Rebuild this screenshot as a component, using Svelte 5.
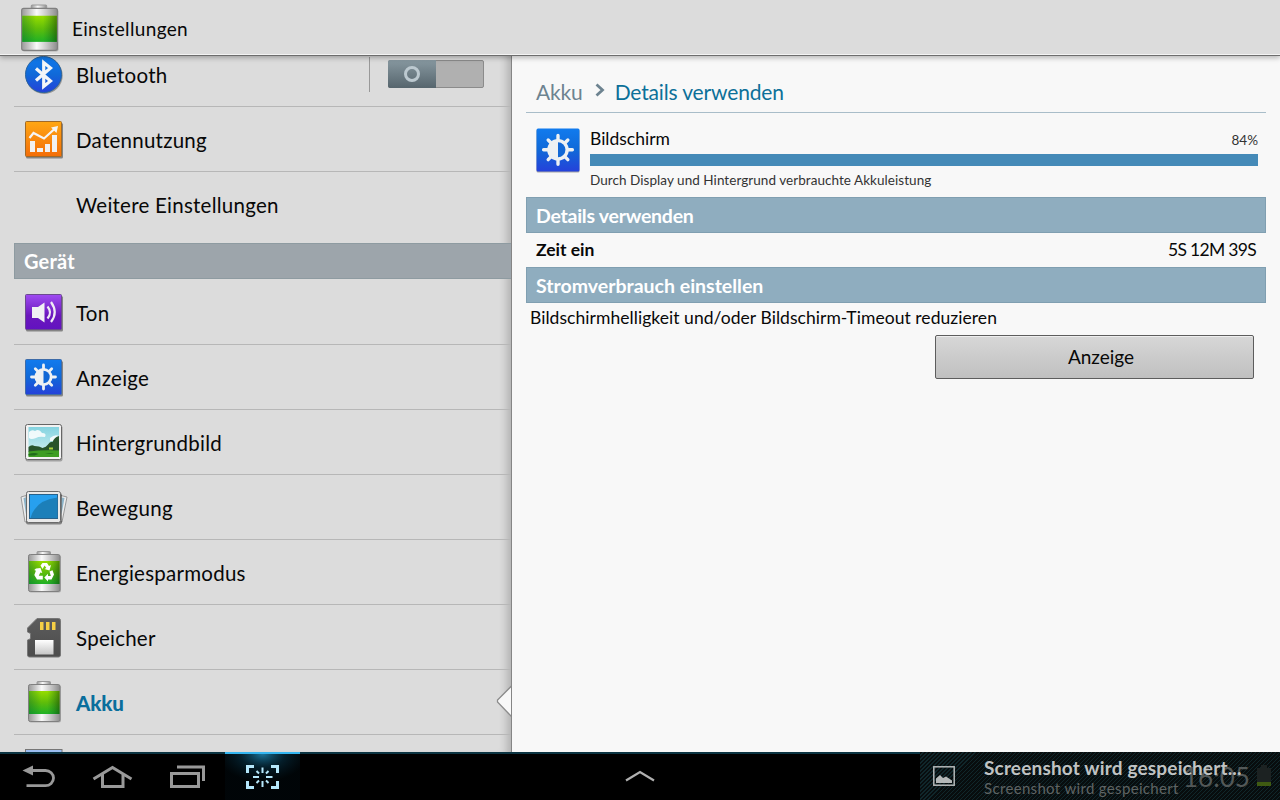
<script>
  const network = [
    { label: 'Bluetooth', icon: 'bluetooth', toggle: true },
    { label: 'Datennutzung', icon: 'data' },
    { label: 'Weitere Einstellungen', icon: '', last: true }
  ];
  const device = [
    { label: 'Ton', icon: 'sound' },
    { label: 'Anzeige', icon: 'display' },
    { label: 'Hintergrundbild', icon: 'wallpaper' },
    { label: 'Bewegung', icon: 'motion' },
    { label: 'Energiesparmodus', icon: 'saver' },
    { label: 'Speicher', icon: 'storage' },
    { label: 'Akku', icon: 'battery', selected: true },
    { label: '', icon: 'next' }
  ];
</script>

{#snippet gear()}
  <g stroke="#eef1f3" stroke-width="2.800" stroke-linecap="round">
    <path d="M23.500 12V36M11.500 24H35.500M15.300 15.800L31.700 32.200M15.300 32.200L31.700 15.800" />
  </g>
  <circle cx="23.500" cy="24" r="9" fill="#eef1f3" />
  <path d="M23.500 17.800a6.200 6.200 0 0 1 0 12.400z" fill="#1268d6" />
{/snippet}

{#snippet battery(saver)}
  <path d="M17 7V4.500Q17 3.500 18 3.500H29.500Q30.500 3.500 30.500 4.500V7z" fill="url(#metal)" stroke="#999" stroke-width="1" />
  <rect x="9" y="7.500" width="32" height="37" rx="1.800" fill="#0003" />
  <rect x="8.500" y="6.500" width="31.500" height="37" rx="1.800" fill="url(#metal)" stroke="#808080" stroke-width="1" />
  <rect x="9" y="13" width="30.500" height="23" fill="url(#green)" />
  <rect x="9" y="13" width="30.500" height="23" fill="url(#side)" />
  {#if saver}
    <g fill="#fff">
      <path d="M20.500 17.500L22.500 15H27L29 18L31 17L29.500 22.500L24.500 21L26.300 20L24.600 17.500L22.500 21z" />
      <path d="M29.500 23.500L32.500 22.300L34 26.500L31.500 31.500H28V33.500L24.300 29.500L28 25.800V28H30.800z" />
      <path d="M16 20.500L20.500 20L22.300 25L20.300 24.500L18.800 27.800H22.800V31.500H17L14.300 27L15.900 22.800L14.300 22z" />
    </g>
  {/if}
{/snippet}

{#snippet icon(name)}
  <svg class="icon" viewBox="0 0 48 48" aria-hidden="true">
    {#if name === 'bluetooth'}
      <circle cx="24.200" cy="25.500" r="18.500" fill="#0005" />
      <circle cx="23.500" cy="24.500" r="18" fill="url(#blue)" stroke="#28649f" stroke-width="1" />
      <path d="M16 18.500L30.500 31L23.700 36.500V12.500L30.500 18L16 30.500" fill="none" stroke="#f4f6f8" stroke-width="3.200" />
    {:else if name === 'data'}
      <rect x="6" y="8" width="37" height="35.500" rx="1.500" fill="#0006" />
      <rect x="5.500" y="6.500" width="36" height="35" rx="1" fill="url(#orange)" stroke="#a06a28" />
      <path d="M10 26h5v11h-5zM17 33h6v4h-6zM25 29h5v8h-5zM32 20h5v17h-5z" fill="#f1f1f1" />
      <path d="M9.500 23L13.500 18L24 23.500L34.500 14" fill="none" stroke="#f5f5f5" stroke-width="2.200" />
      <path d="M31 12.500L38 11L36.500 18z" fill="#f5f5f5" />
    {:else if name === 'sound'}
      <rect x="6" y="8" width="37" height="35.500" rx="1.500" fill="#0006" />
      <rect x="5.500" y="6.500" width="36" height="35" rx="1" fill="url(#purple)" stroke="#6b4a8f" />
      <path d="M12 19h6l6.500-4.500v20L18 30h-6z" fill="#f1f1f3" />
      <path d="M27.500 18.500Q32.500 24.500 27.500 30.500M31 14Q38.500 24.500 31 34" fill="none" stroke="#efeaf4" stroke-width="2.200" />
    {:else if name === 'display'}
      <rect x="6" y="8" width="37" height="35.500" rx="1.500" fill="#0006" />
      <rect x="5.500" y="6.500" width="36" height="35" rx="1" fill="url(#blue)" stroke="#3d6ba8" />
      {@render gear()}
    {:else if name === 'wallpaper'}
      <rect x="5.500" y="7.500" width="37" height="36" rx="2" fill="#0004" />
      <rect x="5.500" y="6.500" width="36" height="35" rx="2" fill="#f2f2f2" stroke="#666" />
      <rect x="8.500" y="9" width="30.500" height="30" fill="url(#sky)" />
      <path d="M9 14q3-3 6-1 4-3 7 2 5 0 3 4-6-1-9 1-5 2-7 0zM30 20q5-4 9-2v5h-9z" fill="#fff" opacity=".85" />
      <path d="M8.500 29q3-3 6-1 5 0 8 2 4-1 5-3 3-4 5-3 2-5 6.500-6v16h-30.500z" fill="#28542b" />
      <path d="M8.500 33.500q14-2 30.500-1V39H8.500z" fill="#3d9d22" />
      <path d="M8.500 36q6-2 10 0l-4 1.500h-6zM25 36q6-1.500 9 0z" fill="#1f6a1b" />
      <path d="M29 30.500h4" stroke="#a8d23a" stroke-width="2" />
    {:else if name === 'motion'}
      <g fill="#ececec" stroke="#999"><path d="M1 14l5-1.500 2 26-3 .500zM47 14l-6-1.500-2 26 3 .500z" /></g>
      <path d="M3.500 15l2.500-.500v17zM44.500 15l-3-.500v17z" fill="#8db4c9" />
      <rect x="6" y="10" width="36" height="31.500" rx="2" fill="#0006" />
      <rect x="6.500" y="8.500" width="34" height="31" rx="2" fill="#e8e8e8" stroke="#6a6a6a" />
      <rect x="9.500" y="11.500" width="28" height="24" fill="#27a0ee" stroke="#28618a" />
      <path d="M10.500 35q5-18 27-20.500V35z" fill="#1c7fb9" />
    {:else if name === 'saver'}
      {@render battery(true)}
    {:else if name === 'battery'}
      {@render battery(false)}
    {:else if name === 'storage'}
      <path d="M17 5.500H38.500Q40.500 5.500 40.500 7.500V42Q40.500 44 38.500 44H9.500Q7.500 44 7.500 42V27Q10.500 26.500 10.500 25V20.500L7.500 19V15z" fill="url(#card)" stroke="#777" />
      <path d="M20 9h3.500v8H20zM26 9h3.500v8H26zM32 9h3.500v8H32z" fill="#f5cf45" />
      <rect x="15" y="27" width="18.500" height="14.500" fill="url(#slot)" />
    {:else if name === 'next'}
      <rect x="5.500" y="6.500" width="36.500" height="36" fill="#9bbcf0" stroke="#777" />
    {/if}
  </svg>
{/snippet}

{#snippet row(item)}
  <li class="row" class:last={item.last} class:selected={item.selected}>
    {@render icon(item.icon)}
    <span class="label">{item.label}</span>
    {#if item.toggle}
      <span class="switch-area"><span class="switch"><span class="knob"><i></i></span></span></span>
    {/if}
  </li>
{/snippet}

<svg class="defs" aria-hidden="true">
  <defs>
    <linearGradient id="metal"><stop offset="0" stop-color="#999" /><stop offset=".2" stop-color="#c4c4c4" /><stop offset=".42" stop-color="#fafafa" /><stop offset=".7" stop-color="#c8c8c8" /><stop offset="1" stop-color="#8c8c8c" /></linearGradient>
    <linearGradient id="green" x2="0" y2="1"><stop offset="0" stop-color="#97dd00" /><stop offset=".5" stop-color="#5fbd0a" /><stop offset="1" stop-color="#1fb126" /></linearGradient>
    <linearGradient id="side"><stop offset="0" stop-color="#063" stop-opacity=".4" /><stop offset=".4" stop-color="#063" stop-opacity="0" /><stop offset=".6" stop-color="#063" stop-opacity="0" /><stop offset="1" stop-color="#052e00" stop-opacity=".5" /></linearGradient>
    <linearGradient id="blue" x2="0" y2="1"><stop offset="0" stop-color="#117bee" /><stop offset=".5" stop-color="#1069d8" /><stop offset="1" stop-color="#2541da" /></linearGradient>
    <linearGradient id="orange" x2="0" y2="1"><stop offset="0" stop-color="#ffa714" /><stop offset="1" stop-color="#f36d08" /></linearGradient>
    <linearGradient id="purple" x2="0" y2="1"><stop offset="0" stop-color="#9f4bf2" /><stop offset=".6" stop-color="#6b17bd" /><stop offset="1" stop-color="#6212c0" /></linearGradient>
    <linearGradient id="sky" x2="0" y2="1"><stop offset="0" stop-color="#84d3e0" /><stop offset="1" stop-color="#d9f3f3" /></linearGradient>
    <linearGradient id="card" x2="0" y2="1"><stop offset="0" stop-color="#5c5c5c" /><stop offset="1" stop-color="#4c4c4c" /></linearGradient>
    <linearGradient id="slot" x2="0" y2="1"><stop offset="0" stop-color="#fff" /><stop offset="1" stop-color="#c6c6c6" /></linearGradient>
    <radialGradient id="glow" cx=".5" cy="0" r=".6"><stop offset="0" stop-color="#2299cc" stop-opacity=".75" /><stop offset=".5" stop-color="#0a4a68" stop-opacity=".4" /><stop offset="1" stop-color="#02141e" stop-opacity=".25" /></radialGradient>
  </defs>
</svg>

<div class="screen">
  <header>
    <svg class="app-icon" viewBox="0 0 48 48" aria-hidden="true">{@render battery(false)}</svg>
    <h1>Einstellungen</h1>
  </header>

  <main>
    <nav class="list">
      <ul>
        {#each network as item}{@render row(item)}{/each}
      </ul>
      <h2 class="group">Gerät</h2>
      <ul>
        {#each device as item}{@render row(item)}{/each}
      </ul>
      <svg class="pointer" viewBox="0 0 16 34" aria-hidden="true">
        <path d="M16 1L1.500 15.500V17L16 32z" fill="#f8f8f8" />
        <path d="M15.500 1L1.500 15V17L15.500 31.500" fill="none" stroke="#8c8c8c" stroke-width="1.300" />
      </svg>
    </nav>

    <section class="detail">
      <div class="crumbs">
        <span>Akku</span>
        <svg viewBox="0 0 12 14" aria-hidden="true"><path d="M2.500 1.500L8.500 7L2.500 12.500" fill="none" stroke="#6d8390" stroke-width="2.800" /></svg>
        <span class="here">Details verwenden</span>
      </div>
      <div class="usage">
        <svg class="big" viewBox="0 0 44 45" aria-hidden="true">
          <rect x=".500" y="1.500" width="43" height="43" rx="1.500" fill="#0005" />
          <rect x=".500" y=".500" width="43" height="43" rx="1.500" fill="url(#blue)" />
          <g transform="translate(-6.200 -7) scale(1.200)">{@render gear()}</g>
        </svg>
        <div class="usage-text">
          <div class="usage-head"><span>Bildschirm</span><small>84%</small></div>
          <div class="bar"></div>
          <p>Durch Display und Hintergrund verbrauchte Akkuleistung</p>
        </div>
      </div>
      <h2 class="band">Details verwenden</h2>
      <div class="stat"><b>Zeit ein</b><span>5S 12M 39S</span></div>
      <h2 class="band tight">Stromverbrauch einstellen</h2>
      <p class="hint">Bildschirmhelligkeit und/oder Bildschirm-Timeout reduzieren</p>
      <button>Anzeige</button>
    </section>
  </main>

  <footer>
    <div class="keys">
      <svg viewBox="0 0 75 46"><path d="M28 16.500H45.500a8 7.600 0 0 1 0 15.200H26.500" fill="none" stroke="#999" stroke-width="2.800" /><path d="M22.500 16.500L33 11.500V21.500z" fill="#999" /></svg>
      <svg viewBox="0 0 75 46"><path d="M18.500 25L37.500 13.500L56.500 25M27.500 20.500V32.500H48V20.500" fill="none" stroke="#999" stroke-width="3" /></svg>
      <svg viewBox="0 0 75 46"><path d="M21.500 19.500H48.500V32.500H21.500zM27 13H53.500V27" fill="none" stroke="#999" stroke-width="3" /></svg>
      <svg class="active" viewBox="0 0 75 46"><rect width="75" height="46" fill="url(#glow)" /><g fill="none" stroke="#b5e7fb" stroke-width="3"><path d="M29 12.500H22.500V19M46 12.500H52.500V19M22.500 27V33.500H29M52.500 27V33.500H46" /><g stroke-width="2"><path d="M37.500 13.500V19M37.500 27V33M28 23H34M41 23H47.500M31.500 17L34 19.500M43.500 17L41 19.500M31.500 29L34 26.500M43.500 29L41 26.500" /></g></g></svg>
    </div>
    <svg class="up" viewBox="0 0 32 16" aria-hidden="true"><path d="M2 12.500L16 4L30 12.500" fill="none" stroke="#b0b0b0" stroke-width="2.200" /></svg>
    <div class="notice">
      <svg class="pic" viewBox="0 0 22 20" aria-hidden="true"><rect x=".800" y=".800" width="20.400" height="18.400" fill="none" stroke="#b4b8b8" stroke-width="1.500" /><path d="M3 17V12.500L7 9L10 12L13 10.500L19 14.500V17z" fill="#b4b8b8" /></svg>
      <div class="messages"><strong>Screenshot wird gespeichert...</strong><span>Screenshot wird gespeichert</span></div>
      <span class="clock">16:05</span>
      <svg class="cell" viewBox="0 0 14 22" aria-hidden="true"><path d="M0 3H4V0H10V3H14V17H0z" fill="#1c2222" /><path d="M0 17H14V21H0z" fill="#3f5a12" /></svg>
    </div>
  </footer>
</div>

<style>
  :global(body) { background: #dcdcdc; overflow: hidden; }
  .defs { position: absolute; width: 0; height: 0; }
  .screen { width: 1280px; height: 800px; display: flex; flex-direction: column; overflow: hidden; font-family: Lato, "Open Sans", sans-serif; color: #080808; white-space: nowrap; }
  h1, h2, p, ul { margin: 0; padding: 0; }
  ul { list-style: none; }
  header { height: 54px; flex: none; display: flex; align-items: center; border-bottom: 1px solid #f4f4f4; box-shadow: 0 1px 0 #6d6d6d, 0 3px 5px #0004; background: #dcdcdc; position: relative; z-index: 2; margin-bottom: 1px; }
  .app-icon { width: 54.500px; height: 54.500px; margin: 3px 5px 0 12.400px; flex: none; }
  h1 { font-size: 19px; font-weight: 400; padding-top: 3px; letter-spacing: .35px; }
  main { flex: 1; min-height: 0; display: flex; }
  .list { width: 511px; flex: none; overflow: hidden; position: relative; box-shadow: inset -10px 0 8px -6px #0003; }
  .list > ul:first-child { margin-top: -14px; }
  .row { height: 64px; margin-left: 14px; padding-left: 6px; display: flex; align-items: center; border-bottom: 1px solid #b7b7b7; }
  .row.last { height: 71px; border: 0; align-items: flex-start; }
  .row.last .icon, .row.last .label { margin-top: 6px; }
  .row.last .label { line-height: 50px; }
  .icon { width: 48px; height: 48px; flex: none; margin-right: 8px; }
  .label { flex: 1; font-size: 20.500px; padding-top: 2px; letter-spacing: .25px; }
  .selected .label { color: #0a6e9c; font-weight: 900; letter-spacing: -.2px; }
  .switch-area { height: 35px; border-left: 1px solid #999; width: 123px; padding-left: 18px; display: flex; align-items: center; }
  .switch { width: 94px; height: 26px; border: 1px solid #8b8b8b; background: #b0b0b0; border-radius: 2px; display: flex; }
  .knob { width: 48px; margin: -1px; border-radius: 2px 0 0 2px; background: linear-gradient(#8798a0, #56656d); display: grid; place-items: center; }
  .knob i { width: 10px; height: 10px; border: 3px solid #bcc9d0; border-radius: 50%; }
  .group { height: 34px; margin: 0 0 1px 14px; border: 1px solid #8e9ba1; border-right: 0; background: #9da5ab; color: #fff; font-size: 20px; line-height: 35px; padding-left: 9px; letter-spacing: .2px; }
  .pointer { position: absolute; width: 16px; height: 34px; left: 496px; top: 629px; }
  .detail { flex: 1; border-left: 1px solid #858585; background: #f8f8f8; padding: 14px 14px 0; display: flex; flex-direction: column; margin-left: 0; }
  .crumbs { height: 42px; border-bottom: 1px solid #a9bdc9; padding-left: 10px; display: flex; align-items: center; font-size: 21px; color: #6d8390; flex: none; letter-spacing: -.15px; }
  .crumbs svg { width: 12px; height: 14px; margin: 0 9px 2px 11px; }
  .here { color: #0c7099; }
  .usage { height: 84px; flex: none; display: flex; padding: 0 8px 0 10px; }
  .big { width: 44px; height: 45px; margin: 15px 10px 0 0; flex: none; }
  .usage-text { flex: 1; }
  .usage-head { height: 41px; display: flex; justify-content: space-between; align-items: flex-end; font-size: 17.500px; line-height: 31px; }
  .usage-head small { font-size: 13.500px; line-height: 28px; color: #333; }
  .bar { height: 12px; background: #458ab8; }
  .usage p { font-size: 13.500px; line-height: 28px; color: #333; letter-spacing: .05px; }
  .band { height: 34px; flex: none; border: 1px solid #809fb1; background: #8fadbf; color: #fff; font-size: 19.500px; line-height: 35px; padding-left: 9px; letter-spacing: -.25px; }
  .band.tight { letter-spacing: 0; }
  .stat { height: 34px; flex: none; display: flex; justify-content: space-between; padding: 0 10px 0 10px; font-size: 17.500px; line-height: 34px; }
  .stat span { letter-spacing: -.7px; }
  .hint { font-size: 17.500px; line-height: 30px; height: 32px; padding-left: 4px; letter-spacing: .05px; }
  button { align-self: flex-end; width: 319px; height: 44px; margin-right: 12px; padding: 0 0 1px 13px; border: 1px solid #5d5d5d; border-radius: 2px; background: linear-gradient(#d7d7d7, #c0c0c0); box-shadow: inset 0 1px #eee; font: 19px Lato, sans-serif; color: #080808; }
  footer { height: 46px; flex: none; border-top: 2px solid #0b3442; background: #000; display: flex; position: relative; }
  .keys { display: flex; width: 623px; }
  .keys svg { width: 75px; height: 46px; }
  .keys .active { border-top: 2px solid #33b5f0; margin-top: -2px; }
  .up { width: 32px; height: 16px; margin: 14px 0 0 1px; }
  .notice { margin-left: auto; margin-top: -2px; width: 360px; height: 48px; background: repeating-linear-gradient(135deg, #080d0e 0 2.100px, #10272b 2.100px 2.830px); position: relative; display: flex; }
  .pic { width: 22px; height: 20px; margin: 14px 0 0 13px; }
  .messages { margin-left: 29px; display: flex; flex-direction: column; color: #c0c3c3; }
  .messages strong { font-size: 19px; line-height: 22px; padding-top: 5px; z-index: 1; letter-spacing: .17px; }
  .messages span { font-size: 15px; line-height: 18px; color: #5f6464; letter-spacing: .33px; }
  .clock { position: absolute; left: 263px; top: 8px; font-size: 26px; color: #535858; line-height: 34px; }
  .cell { position: absolute; width: 14px; height: 22px; left: 337px; top: 13px; }
</style>
